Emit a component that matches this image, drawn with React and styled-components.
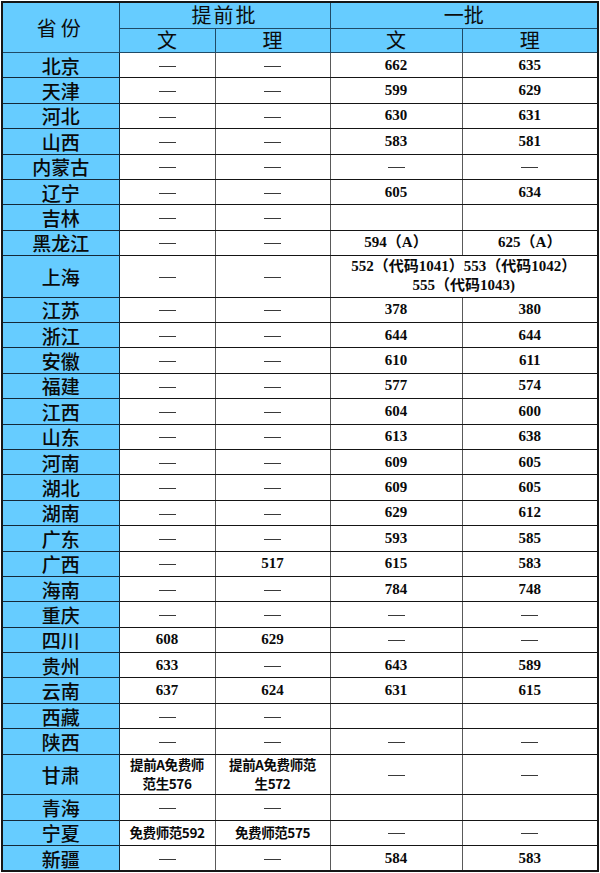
import React from "react";
import styled, { createGlobalStyle } from "styled-components";

const GlobalStyle = createGlobalStyle`
  html, body { margin: 0; padding: 0; background: #ffffff; }
  body { font-family: "Noto Sans CJK SC", "Noto Sans", sans-serif; }
`;

const Page = styled.div`
  padding: 1px 0 0 1px;
  width: 600px;
  box-sizing: border-box;
`;

const Table = styled.table`
  border-collapse: collapse;
  table-layout: fixed;
  width: 596px;
  border: 2px solid #161616;
  box-shadow: 0 2px 0 #cfcfcf;
`;

const HeadCell = styled.th`
  background: #66ccff;
  border: 1.5px solid #1f4a66;
  color: #0c0c0c;
  font-family: "Noto Sans CJK SC", sans-serif;
  font-weight: 400;
  font-size: ${(p) => p.$size || 20}px;
  letter-spacing: ${(p) => p.$spacing || 0}px;
  line-height: 22px;
  height: ${(p) => p.$h}px;
  padding: 0;
  text-align: center;
  vertical-align: middle;
`;

const ProvinceCell = styled.th`
  background: #66ccff;
  border: 1px solid #142838;
  border-right: 1.5px solid #142838;
  color: #0a0a0a;
  font-family: "Noto Sans CJK SC", sans-serif;
  font-weight: 500;
  font-size: 19px;
  line-height: 23px;
  height: ${(p) => p.$h}px;
  padding: 0;
  text-align: center;
  vertical-align: middle;
`;

const DataCell = styled.td`
  background: #ffffff;
  border-top: 1px solid #151515;
  border-bottom: 1px solid #151515;
  border-left: 1px solid #5a5a5a;
  border-right: 1px solid #5a5a5a;
  color: #0a0a0a;
  font-family: "Liberation Serif", "Noto Sans CJK SC", serif;
  font-weight: 700;
  font-size: 15px;
  line-height: 19px;
  height: ${(p) => p.$h}px;
  padding: 0;
  text-align: center;
  vertical-align: middle;
  white-space: nowrap;
`;

const Note = styled.div`
  font-family: "Noto Sans CJK SC", sans-serif;
  font-weight: 700;
  font-size: 13.5px;
  line-height: 19px;
  letter-spacing: -0.4px;
`;

const InlineNote = styled.span`
  font-family: "Noto Sans CJK SC", sans-serif;
  font-weight: 700;
  font-size: 13.5px;
  letter-spacing: -0.4px;
`;

const Dash = styled.span`
  display: inline-block;
  width: 17px;
  height: 1px;
  background: #3a3a3a;
  vertical-align: middle;
`;

const Line = styled.div`
  line-height: 19px;
  height: 19px;
`;

const D = "-";

const rows = [
  ["北京", D, D, "662", "635"],
  ["天津", D, D, "599", "629"],
  ["河北", D, D, "630", "631"],
  ["山西", D, D, "583", "581"],
  ["内蒙古", D, D, D, D],
  ["辽宁", D, D, "605", "634"],
  ["吉林", D, D, "", ""],
  ["黑龙江", D, D, "594（A）", "625（A）"],
  ["上海", D, D, "SH"],
  ["江苏", D, D, "378", "380"],
  ["浙江", D, D, "644", "644"],
  ["安徽", D, D, "610", "611"],
  ["福建", D, D, "577", "574"],
  ["江西", D, D, "604", "600"],
  ["山东", D, D, "613", "638"],
  ["河南", D, D, "609", "605"],
  ["湖北", D, D, "609", "605"],
  ["湖南", D, D, "629", "612"],
  ["广东", D, D, "593", "585"],
  ["广西", D, "517", "615", "583"],
  ["海南", D, D, "784", "748"],
  ["重庆", D, D, D, D],
  ["四川", "608", "629", D, D],
  ["贵州", "633", D, "643", "589"],
  ["云南", "637", "624", "631", "615"],
  ["西藏", D, D, "", ""],
  ["陕西", D, D, D, D],
  ["甘肃", "GS1", "GS2", D, D],
  ["青海", D, D, "", ""],
  ["宁夏", "免费师范592", "免费师范575", D, D],
  ["新疆", D, D, "584", "583"],
];

const rowHeight = { 上海: 40.5, 甘肃: 39.5 };

function renderValue(v) {
  if (v === D) return <Dash />;
  if (v === "GS1")
    return (
      <Note>
        <Line>提前A免费师</Line>
        <Line>范生576</Line>
      </Note>
    );
  if (v === "GS2")
    return (
      <Note>
        <Line>提前A免费师范</Line>
        <Line>生572</Line>
      </Note>
    );
  if (/[\u4e00-\u9fff]/.test(v)) return <InlineNote>{v}</InlineNote>;
  return v;
}

export default function App() {
  return (
    <Page>
      <GlobalStyle />
      <Table>
        <colgroup>
          <col style={{ width: 117 }} />
          <col style={{ width: 96 }} />
          <col style={{ width: 115 }} />
          <col style={{ width: 132 }} />
          <col style={{ width: 136 }} />
        </colgroup>
        <thead>
          <tr>
            <HeadCell rowSpan={2} $spacing={4}>
              省份
            </HeadCell>
            <HeadCell colSpan={2} $h={24.5} $spacing={2}>
              提前批
            </HeadCell>
            <HeadCell colSpan={2} $h={24.5}>
              一批
            </HeadCell>
          </tr>
          <tr>
            <HeadCell $h={23.5}>文</HeadCell>
            <HeadCell $h={23.5}>理</HeadCell>
            <HeadCell $h={23.5}>文</HeadCell>
            <HeadCell $h={23.5}>理</HeadCell>
          </tr>
        </thead>
        <tbody>
          {rows.map((r) => {
            const h = rowHeight[r[0]] || 24.4;
            return (
              <tr key={r[0]}>
                <ProvinceCell $h={h}>{r[0]}</ProvinceCell>
                <DataCell $h={h}>{renderValue(r[1])}</DataCell>
                <DataCell $h={h}>{renderValue(r[2])}</DataCell>
                {r[3] === "SH" ? (
                  <DataCell colSpan={2} $h={h}>
                    <Line>552（代码1041）553（代码1042）</Line>
                    <Line>555（代码1043)</Line>
                  </DataCell>
                ) : (
                  <>
                    <DataCell $h={h}>{renderValue(r[3])}</DataCell>
                    <DataCell $h={h}>{renderValue(r[4])}</DataCell>
                  </>
                )}
              </tr>
            );
          })}
        </tbody>
      </Table>
    </Page>
  );
}
